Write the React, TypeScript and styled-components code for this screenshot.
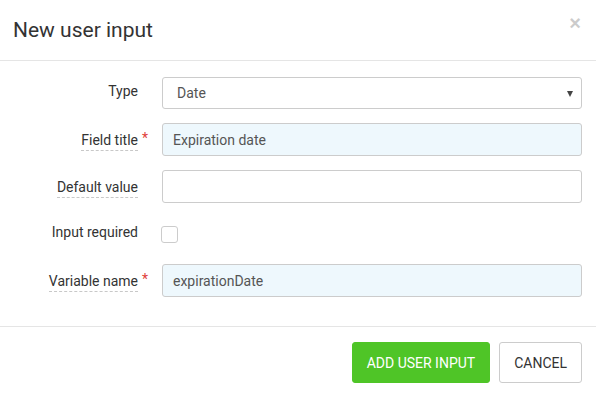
import styled, { createGlobalStyle } from 'styled-components';

const GlobalStyle = createGlobalStyle`
  html, body {
    margin: 0;
    padding: 0;
    background: #fff;
    font-family: Roboto, "Liberation Sans", Arial, sans-serif;
    color: #333;
  }
  * { box-sizing: border-box; }
`;

const Modal = styled.div`
  width: 596px;
  background: #fff;
`;

const Header = styled.div`
  height: 61px;
  padding: 0 15px 0 13px;
  display: flex;
  align-items: center;
  justify-content: space-between;
  border-bottom: 1px solid #e5e5e5;
`;

const Title = styled.h4`
  margin: 0;
  font-size: 21px;
  font-weight: 400;
  color: #333;
`;

const Close = styled.button`
  border: 0;
  background: none;
  padding: 0;
  margin-top: -15px;
  font-size: 20px;
  font-weight: 700;
  line-height: 1;
  color: #000;
  opacity: 0.2;
  font-family: "Liberation Sans", Arial, sans-serif;
`;

const Body = styled.form`
  margin: 0;
  padding: 15px 14px 29px 0;
  display: flex;
  flex-direction: column;
  gap: 14px;
  border-bottom: 1px solid #e5e5e5;
`;

const Row = styled.div`
  display: grid;
  grid-template-columns: 148px 1fr;
  column-gap: 14px;
  align-items: center;
  min-height: 33px;
`;

const LabelCell = styled.div`
  display: flex;
  justify-content: flex-end;
  align-items: center;
  font-size: 14px;
  color: #333;
`;

const LabelText = styled.label<{ $hint?: boolean }>`
  padding-bottom: ${p => (p.$hint ? '2px' : '3px')};
  border-bottom: 1px dashed ${p => (p.$hint ? '#c8c8c8' : 'transparent')};
  margin-top: ${p => (p.$hint ? '3px' : '0')};
`;

const Star = styled.span`
  width: 10px;
  text-align: right;
  color: #e0413a;
  align-self: flex-start;
  margin-top: 1px;
`;

const Input = styled.input<{ $filled?: boolean }>`
  width: 100%;
  height: 33px;
  padding: 0 10px;
  border: 1px solid #ccc;
  border-radius: 3px;
  background: ${p => (p.$filled ? '#eef8fd' : '#fff')};
  font-family: inherit;
  font-size: 14px;
  color: #555;
  outline: none;
`;

const SelectWrap = styled.div`
  position: relative;
  &::after {
    content: '';
    position: absolute;
    right: 9px;
    top: 14px;
    border-left: 3.5px solid transparent;
    border-right: 3.5px solid transparent;
    border-top: 6px solid #444;
  }
`;

const Select = styled.select`
  width: 100%;
  height: 32px;
  padding: 0 14px;
  border: 1px solid #ccc;
  border-radius: 3px;
  background: #fff;
  font-family: inherit;
  font-size: 14px;
  color: #555;
  appearance: none;
  outline: none;
`;

const Checkbox = styled.span`
  display: block;
  width: 17px;
  height: 17px;
  margin-left: -1px;
  margin-top: 2px;
  border: 1px solid #ccc;
  border-radius: 3px;
  background: #fff;
`;

const Footer = styled.div`
  display: flex;
  justify-content: flex-end;
  gap: 9px;
  padding: 15px 14px;
`;

const Button = styled.button<{ $primary?: boolean }>`
  height: 41px;
  padding: 0 14px;
  border-radius: 3px;
  border: 1px solid ${p => (p.$primary ? '#4fc527' : '#ccc')};
  background: ${p => (p.$primary ? '#4fc527' : '#fff')};
  color: ${p => (p.$primary ? '#fff' : '#333')};
  font-family: inherit;
  font-size: 14px;
  text-transform: uppercase;
`;

type FieldProps = {
  label: string;
  hint?: boolean;
  required?: boolean;
  children: React.ReactNode;
};

const Field = ({ label, hint, required, children }: FieldProps) => (
  <Row>
    <LabelCell>
      <LabelText $hint={hint}>{label}</LabelText>
      <Star>{required ? '*' : ''}</Star>
    </LabelCell>
    <div>{children}</div>
  </Row>
);

export default function App() {
  return (
    <>
      <GlobalStyle />
      <Modal>
        <Header>
          <Title>New user input</Title>
          <Close type="button">×</Close>
        </Header>
        <Body>
          <Field label="Type">
            <SelectWrap>
              <Select defaultValue="date">
                <option value="date">Date</option>
              </Select>
            </SelectWrap>
          </Field>
          <Field label="Field title" hint required>
            <Input $filled defaultValue="Expiration date" />
          </Field>
          <Field label="Default value" hint>
            <Input />
          </Field>
          <Field label="Input required">
            <Checkbox />
          </Field>
          <Field label="Variable name" hint required>
            <Input $filled defaultValue="expirationDate" />
          </Field>
        </Body>
        <Footer>
          <Button $primary type="button">Add user input</Button>
          <Button type="button">Cancel</Button>
        </Footer>
      </Modal>
    </>
  );
}
